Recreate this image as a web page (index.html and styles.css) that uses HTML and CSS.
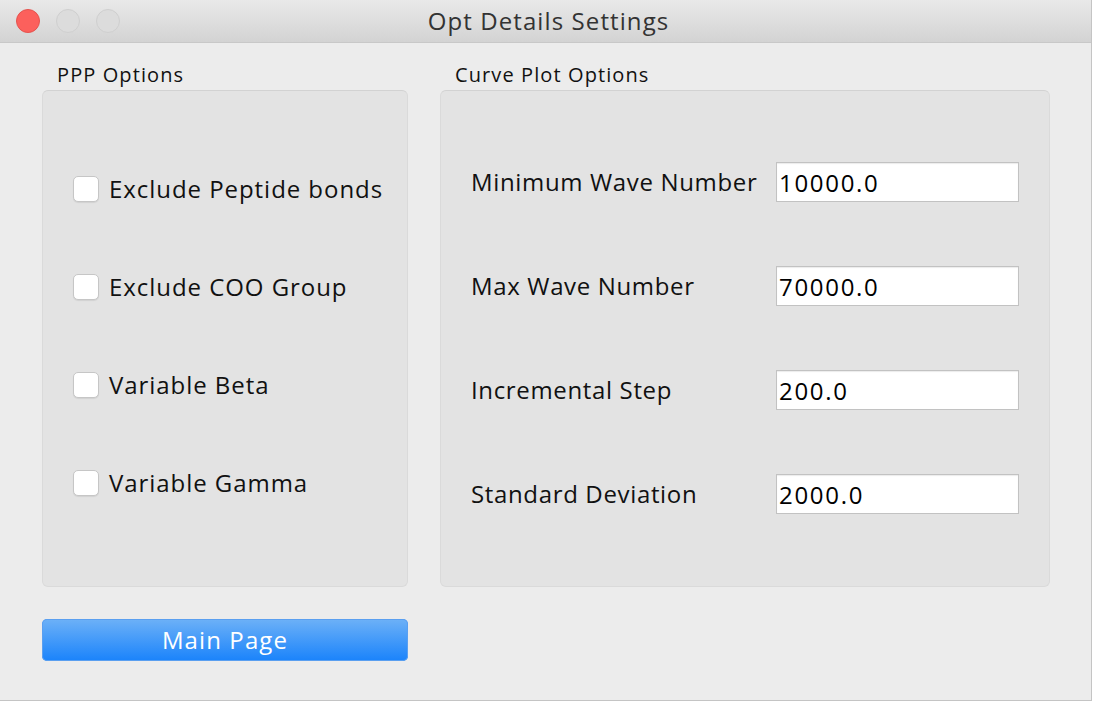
FILE: index.html
```html
<!DOCTYPE html>
<html>
<head>
    <link rel="stylesheet" href="styles.css">
</head>
<body>
    <div class="window">
        <div class="titlebar">
            <div class="lights">
                <span class="light close"></span>
                <span class="light"></span>
                <span class="light"></span>
            </div>
            <div class="title">Opt Details Settings</div>
        </div>

        <div class="content">
            <div class="left-col">
                <div class="group">
                    <div class="group-label">PPP Options</div>
                    <div class="panel ppp-panel">
                        <label class="check-row"><input type="checkbox"><span>Exclude Peptide bonds</span></label>
                        <label class="check-row"><input type="checkbox"><span>Exclude COO Group</span></label>
                        <label class="check-row"><input type="checkbox"><span>Variable Beta</span></label>
                        <label class="check-row"><input type="checkbox"><span>Variable Gamma</span></label>
                    </div>
                </div>
                <button type="button" class="main-btn">Main Page</button>
            </div>

            <div class="group right-group">
                <div class="group-label">Curve Plot Options</div>
                <div class="panel curve-panel">
                    <div class="field-row">
                        <label for="minWave">Minimum Wave Number</label>
                        <input type="text" id="minWave" value="10000.0">
                    </div>
                    <div class="field-row">
                        <label for="maxWave">Max Wave Number</label>
                        <input type="text" id="maxWave" value="70000.0">
                    </div>
                    <div class="field-row">
                        <label for="step">Incremental Step</label>
                        <input type="text" id="step" value="200.0">
                    </div>
                    <div class="field-row">
                        <label for="stdDev">Standard Deviation</label>
                        <input type="text" id="stdDev" value="2000.0">
                    </div>
                </div>
            </div>
        </div>
    </div>
</body>
</html>
```

FILE: styles.css
```css
html, body {
    margin: 0;
    padding: 0;
    background: #ffffff;
}

body {
    font-family: "Open Sans", "Liberation Sans", sans-serif;
    color: #111;
}

.window {
    width: 1091px;
    height: 700px;
    background: #ececec;
    border-right: 1px solid #c4c4c4;
    border-bottom: 1px solid #c4c4c4;
    display: flex;
    flex-direction: column;
}

.titlebar {
    height: 42px;
    background: linear-gradient(#e9e9e9, #d3d3d3);
    border-bottom: 1px solid #c8c8c8;
    display: flex;
    align-items: center;
    justify-content: center;
    position: relative;
}

.lights {
    position: absolute;
    left: 16px;
    top: 9px;
    display: flex;
    gap: 16px;
}

.light {
    width: 22px;
    height: 22px;
    border-radius: 50%;
    background: #dcdcdc;
    border: 1px solid #cfcfcf;
}

.light.close {
    background: #fc605c;
    border-color: #e5534e;
}

.title {
    font-size: 24px;
    letter-spacing: 1.1px;
    color: #333;
    margin-top: -2px;
    margin-left: 6px;
}

.content {
    display: flex;
    gap: 32px;
    padding-left: 42px;
    padding-top: 20px;
}

.left-col {
    width: 366px;
    display: flex;
    flex-direction: column;
}

.group-label {
    font-size: 20px;
    letter-spacing: 1.1px;
    padding-left: 15px;
    height: 27px;
    line-height: 24px;
}

.panel {
    background: #e3e3e3;
    border: 1px solid #dadada;
    border-top-color: #d2d2d2;
    border-radius: 6px;
    height: 495px;
    box-sizing: content-box;
}

.ppp-panel {
    display: flex;
    flex-direction: column;
    gap: 72px;
    padding-top: 85px;
    padding-left: 30px;
    height: 410px;
}

.check-row {
    display: flex;
    align-items: center;
    gap: 10px;
    height: 26px;
    font-size: 24px;
    letter-spacing: 0.95px;
}

.check-row span {
    margin-top: -2px;
}

.check-row input {
    appearance: none;
    margin: 0;
    width: 26px;
    height: 26px;
    background: #ffffff;
    border: 1px solid #c6c6c6;
    border-radius: 5px;
    box-sizing: border-box;
    box-shadow: 0 1px 1px rgba(0, 0, 0, 0.08);
}

.main-btn {
    margin-top: 32px;
    height: 42px;
    width: 366px;
    border: none;
    border-radius: 5px;
    background: linear-gradient(#6db1f7, #1a83fb);
    box-shadow: 0 0 0 1px #5a9ff0 inset;
    color: #ffffff;
    font-family: "Open Sans", "Liberation Sans", sans-serif;
    font-size: 24px;
    letter-spacing: 1.1px;
    padding: 0 0 2px;
    cursor: pointer;
}

.right-group {
    width: 610px;
}

.curve-panel {
    display: flex;
    flex-direction: column;
    gap: 64px;
    padding-top: 71px;
    padding-left: 30px;
    padding-right: 30px;
    height: 424px;
}

.field-row {
    display: flex;
    align-items: center;
    height: 40px;
}

.field-row label {
    width: 305px;
    font-size: 24px;
    letter-spacing: 0.65px;
    margin-top: -2px;
}

.field-row input {
    width: 243px;
    height: 40px;
    box-sizing: border-box;
    border: 1px solid #c2c2c2;
    box-shadow: inset 0 1px 1px rgba(0, 0, 0, 0.08);
    background: #ffffff;
    padding: 0 2px;
    font-family: "Open Sans", "Liberation Sans", sans-serif;
    font-size: 24px;
    letter-spacing: 1.7px;
    color: #000;
    outline: none;
}
```
